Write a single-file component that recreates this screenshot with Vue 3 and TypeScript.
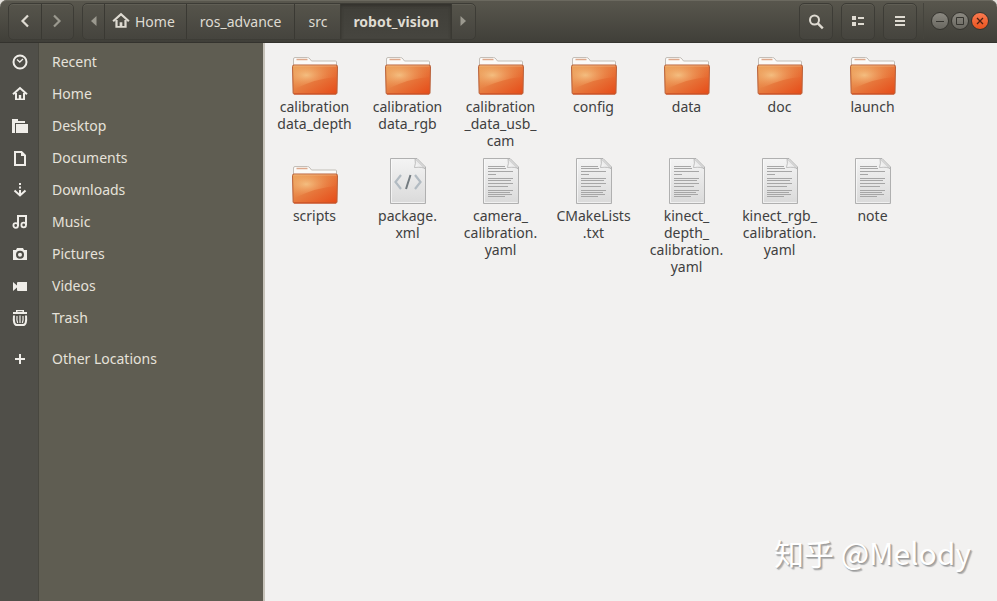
<script setup lang="ts">
import { ref } from 'vue'

type Kind = 'folder' | 'code' | 'text'

interface Entry {
  kind: Kind
  lines: string[]
}

interface Place {
  icon: string
  label: string
}

const places: Place[] = [
  { icon: 'recent', label: 'Recent' },
  { icon: 'home', label: 'Home' },
  { icon: 'desktop', label: 'Desktop' },
  { icon: 'documents', label: 'Documents' },
  { icon: 'downloads', label: 'Downloads' },
  { icon: 'music', label: 'Music' },
  { icon: 'pictures', label: 'Pictures' },
  { icon: 'videos', label: 'Videos' },
  { icon: 'trash', label: 'Trash' },
  { icon: 'plus', label: 'Other Locations' },
]

const crumbs = ['Home', 'ros_advance', 'src', 'robot_vision']
const current = ref('robot_vision')

const entries: Entry[] = [
  { kind: 'folder', lines: ['calibration', 'data_depth'] },
  { kind: 'folder', lines: ['calibration', 'data_rgb'] },
  { kind: 'folder', lines: ['calibration', '_data_usb_', 'cam'] },
  { kind: 'folder', lines: ['config'] },
  { kind: 'folder', lines: ['data'] },
  { kind: 'folder', lines: ['doc'] },
  { kind: 'folder', lines: ['launch'] },
  { kind: 'folder', lines: ['scripts'] },
  { kind: 'code', lines: ['package.', 'xml'] },
  { kind: 'text', lines: ['camera_', 'calibration.', 'yaml'] },
  { kind: 'text', lines: ['CMakeLists', '.txt'] },
  { kind: 'text', lines: ['kinect_', 'depth_', 'calibration.', 'yaml'] },
  { kind: 'text', lines: ['kinect_rgb_', 'calibration.', 'yaml'] },
  { kind: 'text', lines: ['note'] },
]
</script>

<template>
  <div class="window">
    <svg class="defs" width="0" height="0" aria-hidden="true">
      <defs>
        <linearGradient id="folder-fill" x1="0" y1="0" x2="1" y2="1">
          <stop offset="0" stop-color="#e9a65c" />
          <stop offset="0.45" stop-color="#e77f42" />
          <stop offset="1" stop-color="#e64a17" />
        </linearGradient>
        <radialGradient id="folder-glow" cx="0.3" cy="0.4" r="0.75">
          <stop offset="0" stop-color="#f8cf92" stop-opacity="0.75" />
          <stop offset="1" stop-color="#ee8040" stop-opacity="0" />
        </radialGradient>
        <linearGradient id="paper-fill" x1="0" y1="0" x2="0" y2="1">
          <stop offset="0" stop-color="#f4f4f4" />
          <stop offset="1" stop-color="#dadada" />
        </linearGradient>
        <linearGradient id="fold-fill" x1="0" y1="1" x2="1" y2="0">
          <stop offset="0" stop-color="#ffffff" />
          <stop offset="0.5" stop-color="#e8e8e8" />
          <stop offset="1" stop-color="#b4b4b4" />
        </linearGradient>
        <symbol id="home" viewBox="0 0 16 16">
          <path d="M1 8.2 8 2l7 6.2" fill="none" stroke="currentColor" stroke-width="2" />
          <path d="M3 7h2v5.5h1.8V9h2.4v3.5H11V7h2v7H3z" fill="currentColor" />
        </symbol>
        <symbol id="recent" viewBox="0 0 16 16">
          <circle cx="8" cy="8" r="6.5" fill="none" stroke="currentColor" stroke-width="2" />
          <path d="M5 5.5 7.8 8 11 5" fill="none" stroke="currentColor" stroke-width="1.3" />
        </symbol>
        <symbol id="desktop" viewBox="0 0 16 16">
          <path d="M0 1h6v2h7v2H3v9.5H0z M4 6h12v9H4z" fill="currentColor" />
          <path d="M0 14h3v1H0z" fill="currentColor" />
        </symbol>
        <symbol id="documents" viewBox="0 0 16 16">
          <path d="M3 2h6.5L13 5.500V15H3z" fill="none" stroke="currentColor" stroke-width="2" />
          <path d="M9 2v4h4z" fill="currentColor" />
        </symbol>
        <symbol id="downloads" viewBox="0 0 16 16">
          <path d="M7 1h2v2H7z M7 4.500h2v2H7z M7 8h2v5H7z" fill="currentColor" />
          <path d="M2.500 8.500 8 13.500l5.500-5" fill="none" stroke="currentColor" stroke-width="2" />
        </symbol>
        <symbol id="music" viewBox="0 0 16 16">
          <path d="M6 12V2h8v9" fill="none" stroke="currentColor" stroke-width="2" />
          <circle cx="3.700" cy="11.500" r="2.300" fill="none" stroke="currentColor" stroke-width="1.800" />
          <circle cx="11.700" cy="11" r="2.300" fill="none" stroke="currentColor" stroke-width="1.800" />
        </symbol>
        <symbol id="pictures" viewBox="0 0 16 16">
          <path fill-rule="evenodd" fill="currentColor" d="M1 4h3l1-2h6l1 2h3v10H1z M8 4.800a4 4 0 1 0 0 8 4 4 0 0 0 0-8z M8 6.800a2 2 0 1 1 0 4 2 2 0 0 1 0-4z" />
        </symbol>
        <symbol id="videos" viewBox="0 0 16 16">
          <path d="M1 4v9l4-3.500V12q0 1 1 1h9V4H6Q5 4 5 5v2.500z" fill="currentColor" />
        </symbol>
        <symbol id="trash" viewBox="0 0 16 16">
          <path fill-rule="evenodd" d="M4 2V0h8v2h3v2H1V2z M5.500 1.300h5V2h-5z" fill="currentColor" />
          <path d="M2 5.500Q1 15 5 15h6q4 0 3-9.500" fill="none" stroke="currentColor" stroke-width="2" />
          <path d="M5 6q-.5 4 .7 7M8 5.500V13M11 6q.5 4-.7 7" fill="none" stroke="currentColor" stroke-width="1.200" />
        </symbol>
        <symbol id="plus" viewBox="0 0 16 16">
          <path d="M8 3v10M3 8h10" stroke="currentColor" stroke-width="2" />
        </symbol>
        <symbol id="folder" viewBox="0 0 48 48">
          <path d="M2.500 18V11q0-1.500 1.500-1.500h12.500q1.500 0 2.500 1.500l1.500 2h24q1 0 1 1v6z" fill="#fbfaf8" stroke="#c3beb8" />
          <path d="M5.500 11.500h11" stroke="#dda98d" stroke-width="1.500" />
          <path d="M1.500 18.500q0-1.500 1.500-1.500h42q1.500 0 1.500 1.500l-.5 26.500q0 1-1.200 1h-41.500q-1.200 0-1.200-1z" fill="url(#folder-fill)" stroke="#b9623c" />
          <path d="M2.500 18h43l-.4 11Q27 30 3.200 41z" fill="url(#folder-glow)" />
          <path d="M3 18h42" stroke="#f3bd8c" opacity=".6" />
          <path d="M3 46h42" stroke="#d04a1d" />
        </symbol>
        <symbol id="paper" viewBox="0 0 48 48">
          <path d="M6.500 1.500H33L41.500 10V46.500h-35z" fill="url(#paper-fill)" stroke="#b0b0b0" />
          <path d="M7.500 2.500v43h33" fill="none" stroke="#fff" opacity=".6" />
          <path d="M31 1.500 41.500 12q-3-2.500-11-1.500 1.500-4 .5-9z" fill="url(#fold-fill)" stroke="#b0b0b0" stroke-width=".8" />
        </symbol>
        <symbol id="text" viewBox="0 0 48 48">
          <use href="#paper" width="48" height="48" />
          <path d="M11 9.500h17M11 11.500h18M11 14.500h25M11 17.500h8M11 21.500h25M11 23.500h23M11 26.500h25M11 29.500h20M11 33.500h25M11 35.500h22M11 37.500h24M11 39.500h17" stroke="#a6a6a6" stroke-width="1" />
        </symbol>
        <symbol id="code" viewBox="0 0 48 48">
          <use href="#paper" width="48" height="48" />
          <path d="m17 18-5.500 7L17 32M31 18l5.500 7L31 32" fill="none" stroke="#b2bbc2" stroke-width="2.200" />
          <path d="m26.500 18-4.500 14" stroke="#737b80" stroke-width="2" />
        </symbol>
      </defs>
    </svg>

    <header class="titlebar">
      <nav class="group history" aria-label="History">
        <button type="button" class="seg nav" aria-label="Back">
          <svg width="16" height="16" viewBox="0 0 16 16"><path d="M11 2.500 5.500 8l5.500 5.500" fill="none" stroke="currentColor" stroke-width="2.200" /></svg>
        </button>
        <button type="button" class="seg nav dim" aria-label="Forward">
          <svg width="16" height="16" viewBox="0 0 16 16"><path d="M5 2.500 10.500 8 5 13.500" fill="none" stroke="currentColor" stroke-width="2.200" /></svg>
        </button>
      </nav>

      <nav class="group path" aria-label="Path">
        <button type="button" class="seg arrow dim" aria-label="Scroll path left">
          <svg width="6" height="10" viewBox="0 0 6 10"><path d="M5.500 0v10L0 5z" fill="currentColor" /></svg>
        </button>
        <button
          v-for="crumb in crumbs"
          :key="crumb"
          type="button"
          class="seg crumb"
          :class="{ active: crumb === current, root: crumb === 'Home' }"
          @click="current = crumb"
        >
          <svg v-if="crumb === 'Home'" width="18" height="18" aria-hidden="true"><use href="#home" /></svg>
          <span>{{ crumb }}</span>
        </button>
        <button type="button" class="seg arrow next dim" aria-label="Scroll path right">
          <svg width="6" height="10" viewBox="0 0 6 10"><path d="M.5 0v10L6 5z" fill="currentColor" /></svg>
        </button>
      </nav>

      <div class="tools">
        <button type="button" class="group tool" aria-label="Search">
          <svg width="16" height="16" viewBox="0 0 16 16"><circle cx="6.500" cy="6" r="4.500" fill="none" stroke="currentColor" stroke-width="2" /><path d="m9.800 9.300 5 5" stroke="currentColor" stroke-width="2.400" /></svg>
        </button>
        <button type="button" class="group tool" aria-label="View as list">
          <svg width="16" height="16" viewBox="0 0 16 16"><path d="M2 2h4v4H2zM2 8h4v4H2zM8 3h6v2H8zM8 9h6v2H8z" fill="currentColor" /></svg>
        </button>
        <button type="button" class="group tool" aria-label="Menu">
          <svg width="16" height="16" viewBox="0 0 16 16"><path d="M3 2h10v2H3zM3 6h10v2H3zM3 10h10v2H3z" fill="currentColor" /></svg>
        </button>
      </div>

      <div class="controls">
        <button type="button" class="control" aria-label="Minimize">
          <svg width="16" height="16" viewBox="0 0 16 16"><path d="M4 8.500h8" stroke="currentColor" /></svg>
        </button>
        <button type="button" class="control" aria-label="Maximize">
          <svg width="16" height="16" viewBox="0 0 16 16"><path d="M4.500 4.500h7v7h-7z" fill="none" stroke="currentColor" /></svg>
        </button>
        <button type="button" class="control close" aria-label="Close">
          <svg width="16" height="16" viewBox="0 0 16 16"><path d="m5 5 6 6m0-6-6 6" stroke="currentColor" stroke-width="1.300" /></svg>
        </button>
      </div>
    </header>

    <div class="body">
      <aside class="sidebar">
        <a v-for="place in places" :key="place.label" href="#" class="place" :class="{ other: place.icon === 'plus' }">
          <span class="place-icon"><svg width="16" height="16" aria-hidden="true"><use :href="'#' + place.icon" /></svg></span>
          <span class="place-label">{{ place.label }}</span>
        </a>
      </aside>

      <main class="files">
        <figure v-for="entry in entries" :key="entry.lines.join('')" class="entry">
          <svg width="48" height="48" aria-hidden="true"><use :href="'#' + entry.kind" /></svg>
          <figcaption>{{ entry.lines.join('\n') }}</figcaption>
        </figure>
      </main>
    </div>

    <div class="watermark">知乎 @Melody</div>
  </div>
</template>

<style>
body {
  margin: 0;
  background: #e4e1dc;
}
</style>

<style scoped>
.window {
  position: relative;
  display: flex;
  flex-direction: column;
  min-height: 100vh;
  font-family: "Noto Sans", "Open Sans", sans-serif;
  font-size: 14px;
  color: #404040;
}
.defs {
  position: absolute;
}
.titlebar {
  display: flex;
  box-sizing: border-box;
  height: 43px;
  padding: 3px 8px;
  border-bottom: 1px solid #34332e;
  border-radius: 7px 7px 0 0;
  background: linear-gradient(#59574e, #403f39);
  box-shadow: inset 0 1px #6b695f;
  color: #dfdbd2;
}
button {
  margin: 0;
  padding: 0;
  border: 0;
  background: none;
  color: inherit;
  font: inherit;
}
.group {
  display: flex;
  box-sizing: border-box;
  height: 37px;
  border: 1px solid #3d3c36;
  border-radius: 5px;
  background: linear-gradient(#56544b, #45443e);
  box-shadow: inset 0 1px #605e55;
}
.history {
  width: 66px;
}
.seg {
  display: flex;
  align-items: center;
  justify-content: center;
  border-left: 1px solid #3a3933;
}
.seg:first-child {
  border-left: 0;
}
.nav {
  flex: 1;
}
.nav svg,
.arrow svg {
  padding-bottom: 2px;
}
.dim {
  color: #9b998f;
}
.path {
  margin-left: 8px;
}
.arrow {
  width: 21px;
}
.arrow.next {
  width: 24px;
}
.crumb {
  gap: 5px;
  padding: 0 13px;
}
.crumb.root {
  padding: 0 11px 0 7px;
}
.crumb svg {
  padding-bottom: 2px;
}
.crumb.active {
  padding: 0 12px;
  background: linear-gradient(#403f39, #46453f);
  box-shadow: inset 0 2px 3px #33322d;
  font-weight: 700;
}
.tools {
  display: flex;
  gap: 8px;
  margin-left: auto;
  padding-right: 6px;
}
.tool {
  width: 34px;
  align-items: center;
  justify-content: center;
}
.controls {
  display: flex;
  align-items: center;
  gap: 2px;
  padding-left: 7px;
  border-left: 1px solid #45443d;
}
.control {
  display: flex;
  box-sizing: border-box;
  width: 18px;
  height: 18px;
  align-items: center;
  justify-content: center;
  border: 1px solid #35342f;
  border-radius: 50%;
  background: linear-gradient(#8b8981, #696760);
  color: #35342f;
}
.close {
  background: linear-gradient(#fa7a50, #e9541f);
  color: #4a2013;
}
.body {
  display: flex;
  flex: 1;
}
.sidebar {
  box-sizing: border-box;
  width: 265px;
  flex: none;
  padding-top: 3px;
  border-right: 2px solid #c6c2b9;
  background: linear-gradient(90deg, #504f49 38px, #48473f 38px, #48473f 39px, #5f5d52 39px);
}
.place {
  display: flex;
  height: 32px;
  align-items: center;
  color: #e6e2da;
  text-decoration: none;
}
.other {
  margin-top: 9px;
}
.place-icon {
  display: flex;
  width: 40px;
  justify-content: center;
  color: #f0eee9;
}
.place-label {
  padding: 0 0 2px 12px;
}
.files {
  display: grid;
  flex: 1;
  grid-template-columns: repeat(auto-fill, 93px);
  align-content: start;
  row-gap: 8px;
  padding: 5px 3px;
  background: #f2f1f0;
}
.entry {
  display: flex;
  flex-direction: column;
  align-items: center;
  margin: 0;
}
figcaption {
  margin-top: 2px;
  line-height: 17px;
  text-align: center;
  white-space: pre-line;
}
.watermark {
  position: absolute;
  right: 26px;
  bottom: 27px;
  color: #fff;
  font-family: "Noto Sans CJK SC", sans-serif;
  font-size: 30px;
  line-height: 44px;
  text-shadow: 1px 1px 1px #999, 2px 2px 1px #b5b5b5;
}
</style>
